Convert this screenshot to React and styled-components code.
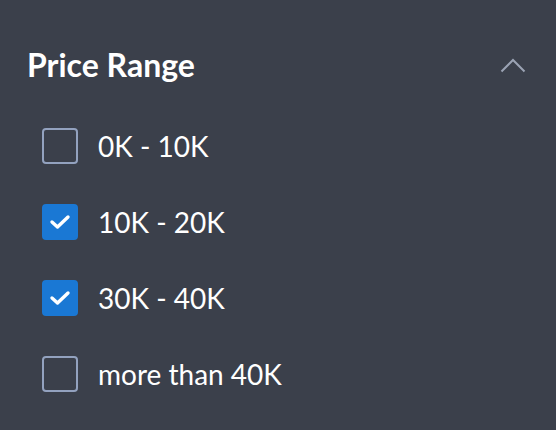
import React, { useState } from "react"
import styled, { createGlobalStyle } from "styled-components"

const GlobalStyle = createGlobalStyle`
  html, body {
    margin: 0;
    padding: 0;
    background: #3b404b;
  }
`

const ranges = [
  { id: "0-10", label: "0K - 10K", checked: false },
  { id: "10-20", label: "10K - 20K", checked: true },
  { id: "30-40", label: "30K - 40K", checked: true },
  { id: "40+", label: "more than 40K", checked: false },
]

export default function App() {
  const [items, setItems] = useState(ranges)

  const toggle = (id) => {
    setItems((prev) => prev.map((i) => (i.id === id ? { ...i, checked: !i.checked } : i)))
  }

  return (
    <>
      <GlobalStyle />
      <F.Panel>
        <F.Header>
          <F.Title>Price Range</F.Title>
          <F.Chevron width="26" height="15" viewBox="0 0 26 15">
            <path d="M1.5 13.5 L13 2 L24.5 13.5" fill="none" stroke="#9ba3b4" strokeWidth="2" />
          </F.Chevron>
        </F.Header>
        <F.List>
          {items.map((item) => (
            <F.Row key={item.id} onClick={() => toggle(item.id)}>
              <F.Box checked={item.checked}>
                {item.checked && (
                  <svg width="22" height="16" viewBox="0 0 22 16">
                    <path d="M3 8 L8.5 13 L19 3" fill="none" stroke="#fff" strokeWidth="3.4" strokeLinecap="round" strokeLinejoin="round" />
                  </svg>
                )}
              </F.Box>
              <F.Label>{item.label}</F.Label>
            </F.Row>
          ))}
        </F.List>
      </F.Panel>
    </>
  )
}

const F = {
  Panel: styled.div`
    width: 556px;
    height: 430px;
    box-sizing: border-box;
    padding: 44px 28px 0 27px;
    background: #3b404b;
    font-family: Lato, "Open Sans", sans-serif;
  `,
  Header: styled.div`
    display: flex;
    align-items: center;
    justify-content: space-between;
    height: 42px;
  `,
  Title: styled.h2`
    margin: 0;
    color: #ffffff;
    font-size: 32px;
    font-weight: 700;
    line-height: 42px;
  `,
  Chevron: styled.svg`
    margin-right: 2px;
    display: block;
  `,
  List: styled.div`
    display: flex;
    flex-direction: column;
    gap: 40px;
    margin-top: 42px;
    padding-left: 15px;
  `,
  Row: styled.label`
    display: flex;
    align-items: center;
    gap: 20px;
    height: 36px;
    cursor: pointer;
  `,
  Box: styled.span`
    display: flex;
    align-items: center;
    justify-content: center;
    width: 36px;
    height: 36px;
    box-sizing: border-box;
    border-radius: 4px;
    border: 2px solid ${(props) => (props.checked ? "#1a78d4" : "#93a2bf")};
    background: ${(props) => (props.checked ? "#1a78d4" : "transparent")};
  `,
  Label: styled.span`
    color: #ffffff;
    font-size: 28px;
    line-height: 36px;
  `,
}
